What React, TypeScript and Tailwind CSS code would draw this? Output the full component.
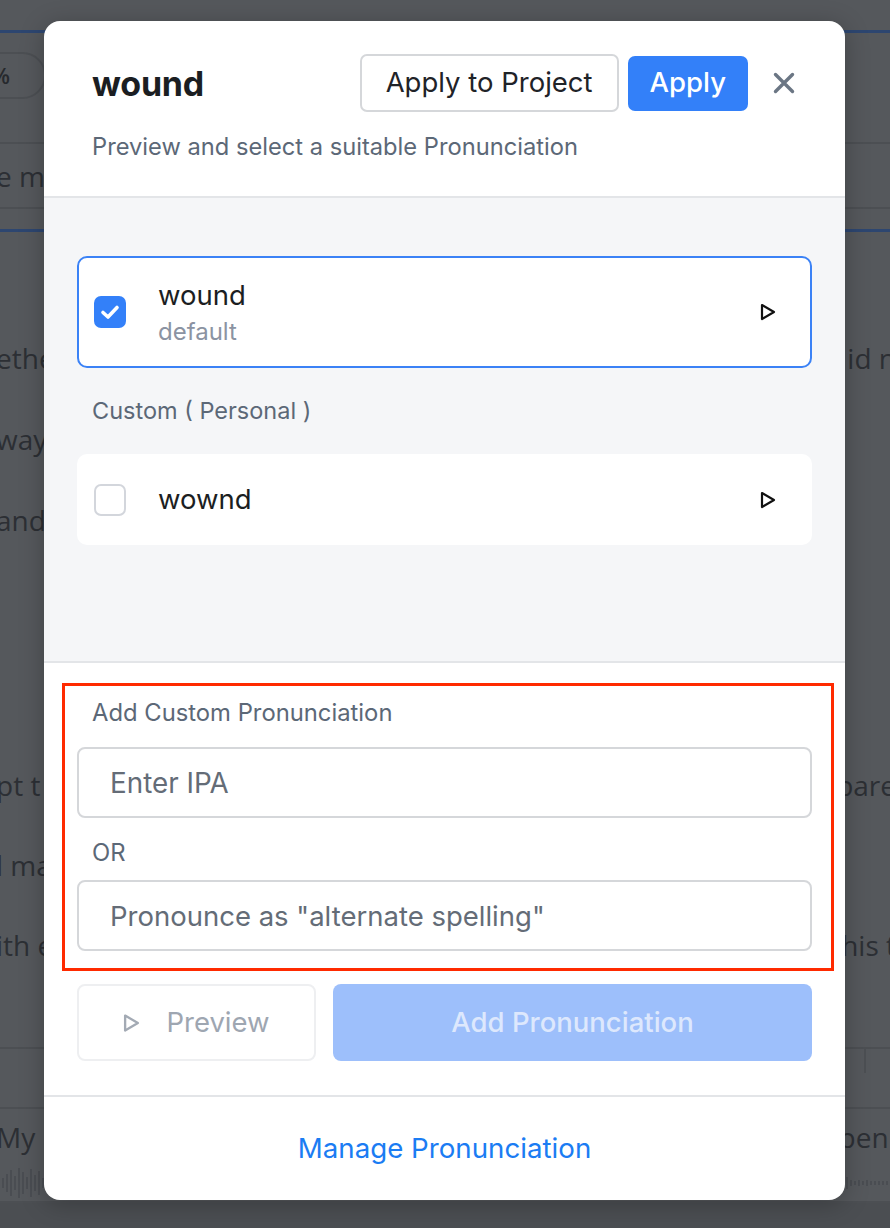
import React from 'react';

const Play = ({ className = '' }: { className?: string }) => (
  <svg viewBox="0 0 16 18" className={className} fill="none" stroke="currentColor" strokeWidth={2.2} strokeLinejoin="round">
    <path d="M2 2 L14 9 L2 16 Z" />
  </svg>
);

const Checkbox = ({ checked }: { checked?: boolean }) =>
  checked ? (
    <div className="w-[32px] h-[32px] shrink-0 rounded-[7px] bg-[#3380f9] flex items-center justify-center">
      <svg viewBox="0 0 32 32" className="w-[32px] h-[32px]" fill="none" stroke="white" strokeWidth={3.6} strokeLinecap="round" strokeLinejoin="round">
        <path d="M9 16.5 L14 21 L23 11.5" />
      </svg>
    </div>
  ) : (
    <div className="w-[32px] h-[32px] shrink-0 rounded-[7px] border-2 border-[#d3d6dc] bg-white" />
  );

const BgLine = ({ left, right, h = 'h-[80px]' }: { left?: string; right?: string; h?: string }) => (
  <div className={`${h} flex items-center justify-between whitespace-nowrap text-[28px] text-[#2c2f34]`}>
    <span className="-ml-[4px]">{left}</span>
    <span className="-mr-[6px]">{right}</span>
  </div>
);

export default function App() {
  return (
    <div className="relative w-[890px] h-[1228px] overflow-hidden bg-[#55585c] font-['Open_Sans',sans-serif]">
      {/* page behind the dialog */}
      <div className="flex flex-col">
        <div className="h-[30px]" />
        <div className="h-[3px] bg-[#2d4670]" />
        <div className="h-[19px]" />
        <div className="h-[47px] flex items-center">
          <div className="-ml-[50px] w-[96px] h-[47px] rounded-full border-2 border-[#4c4f53] flex items-center justify-end pr-[34px] text-[22px] font-semibold text-[#26292d]">
            %
          </div>
        </div>
        <div className="h-[43px]" />
        <div className="h-[2px] bg-[#4c4f53]" />
        <div className="h-[63px] flex items-center text-[28px] text-[#2c2f34] whitespace-nowrap">
          <span className="-ml-[4px]">e m</span>
        </div>
        <div className="h-[2px] bg-[#4c4f53]" />
        <div className="h-[20px]" />
        <div className="h-[3px] bg-[#2d4670]" />
        <div className="h-[85px]" />
        <BgLine left="ether" right="id n" h="h-[81px]" />
        <BgLine left="way" h="h-[81px]" />
        <BgLine left="and" h="h-[81px]" />
        <div className="h-[185px]" />
        <BgLine left="pt t" right="pare" />
        <BgLine left="l ma" />
        <BgLine left="ith e" right="his t" />
        <div className="h-[62px]" />
        <div className="h-[2px] bg-[#4c4f53]" />
        <div className="h-[58px] flex justify-end pr-[24px]">
          <div className="w-[2px] h-[24px] bg-[#4c4f53]" />
        </div>
        <div className="h-[2px] bg-[#4c4f53]" />
        <BgLine left="My" right="pen." h="h-[56px]" />
        <div className="h-[36px] flex items-center justify-between">
          <div className="flex items-center gap-[2px] ml-[2px]">
            {[10, 18, 26, 14, 30, 22, 12, 28, 16, 24, 10, 20, 14].map((v, i) => (
              <div key={i} className="w-[2px] bg-[#4a4d52]" style={{ height: v }} />
            ))}
          </div>
          <div className="flex items-center gap-[2px] mr-[2px]">
            {[6, 10, 14, 8, 12, 6, 4, 6, 4, 6, 4, 4, 4, 4, 4].map((v, i) => (
              <div key={i} className="w-[2px] bg-[#4a4d52]" style={{ height: v }} />
            ))}
          </div>
        </div>
        <div className="h-[2px] bg-[#4c4f53]" />
        <div className="h-[40px] bg-[#4b4e52]" />
      </div>

      {/* dialog */}
      <div className="absolute left-[44px] top-[21px] w-[801px] h-[1179px] bg-white rounded-[16px] shadow-[0_4px_24px_rgba(0,0,0,0.25)] overflow-hidden flex flex-col font-['Inter',sans-serif]">
        <div className="pl-[48px] pr-[50px] pt-[33px] pb-[34px] border-b-2 border-[#e3e5e8]">
          <div className="flex items-center">
            <h1 className="flex-1 text-[34px] font-bold text-[#1b1e22] tracking-[-0.2px]">wound</h1>
            <button className="h-[58px] px-[24px] rounded-[7px] border-2 border-[#d5d7da] bg-white text-[27.5px] text-[#1f2328]">
              Apply to Project
            </button>
            <button className="ml-[9px] h-[55px] px-[22px] rounded-[7px] bg-[#3380f9] text-[27.5px] font-medium text-white">
              Apply
            </button>
            <button className="ml-[25px] w-[22px] h-[22px] text-[#6b7684]">
              <svg viewBox="0 0 22 22" className="w-[22px] h-[22px]" fill="none" stroke="currentColor" strokeWidth={3.4} strokeLinecap="round">
                <path d="M2.5 2.5 L19.5 19.5 M19.5 2.5 L2.5 19.5" />
              </svg>
            </button>
          </div>
          <p className="mt-[20px] text-[23.7px] leading-[30px] text-[#5c6877]">Preview and select a suitable Pronunciation</p>
        </div>

        <div className="h-[463px] bg-[#f5f6f8] px-[33px] pt-[58px] flex flex-col">
          <div className="h-[112px] rounded-[10px] border-2 border-[#3b82f6] bg-white flex items-center pl-[15px] pr-[34px]">
            <Checkbox checked />
            <div className="ml-[32px] flex-1 flex flex-col">
              <span className="text-[27.5px] leading-[36px] text-[#1b1e22]">wound</span>
              <span className="mt-[4px] text-[24px] leading-[30px] text-[#8b93a2]">default</span>
            </div>
            <Play className="w-[16px] h-[18px] text-[#111]" />
          </div>
          <div className="mt-[28px] pl-[15px] text-[23.5px] leading-[30px] text-[#5c6877]">Custom ( Personal )</div>
          <div className="mt-[28px] h-[91px] rounded-[10px] bg-white flex items-center pl-[17px] pr-[36px]">
            <Checkbox />
            <span className="ml-[32px] flex-1 text-[27.5px] text-[#1b1e22]">wownd</span>
            <Play className="w-[16px] h-[18px] text-[#111]" />
          </div>
        </div>

        <div className="relative flex-1 flex flex-col border-t-2 border-[#e3e5e8]">
          <div className="px-[33px] pt-[35px] pb-[34px] flex flex-col">
            <div className="pl-[15px] text-[23.8px] leading-[30px] text-[#5c6877]">Add Custom Pronunciation</div>
            <input
              placeholder="Enter IPA"
              className="mt-[19px] h-[71px] rounded-[8px] border-2 border-[#d5d7da] px-[31px] text-[27.8px] text-[#1f2328] placeholder:text-[#646c77] outline-none"
            />
            <div className="mt-[20px] pl-[15px] text-[23.8px] leading-[30px] text-[#5c6877]">OR</div>
            <input
              placeholder={'Pronounce as "alternate spelling"'}
              className="mt-[12px] h-[71px] rounded-[8px] border-2 border-[#d5d7da] px-[31px] text-[27.5px] text-[#1f2328] placeholder:text-[#646c77] outline-none"
            />
            <div className="mt-[33px] flex gap-[17px]">
              <button className="w-[239px] h-[77px] rounded-[8px] border-2 border-[#eeeff1] bg-white flex items-center justify-center gap-[26px] text-[27.5px] text-[#9ea6b1]">
                <Play className="w-[17px] h-[20px] text-[#a3aab4]" />
                Preview
              </button>
              <button className="flex-1 h-[77px] rounded-[8px] bg-[#9dbffb] text-[27.5px] font-medium text-[#dde8fd]">
                Add Pronunciation
              </button>
            </div>
          </div>
          <div className="flex-1 border-t-2 border-[#e3e5e8] flex items-center justify-center">
            <a className="text-[27.7px] text-[#1b7cf3]">Manage Pronunciation</a>
          </div>

          {/* annotation frame */}
          <div className="absolute left-[18px] top-[20px] w-[772px] h-[288px] border-[3px] border-[#ff2a00] pointer-events-none" />
        </div>
      </div>
    </div>
  );
}
